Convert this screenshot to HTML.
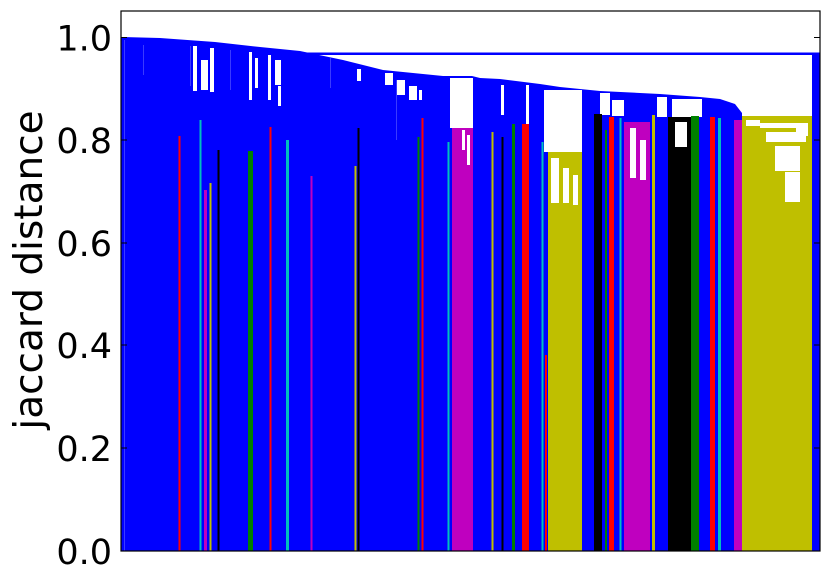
<!DOCTYPE html>
<html><head><meta charset="utf-8"><style>
html,body{margin:0;padding:0;background:#fff;}
svg{display:block;}
text{font-family:"DejaVu Sans","Liberation Sans",sans-serif;fill:#000;}
</style></head><body>
<svg width="831" height="581" viewBox="0 0 831 581" xmlns="http://www.w3.org/2000/svg">
<polygon fill="#0000ff" points="121,37 160,38 215,42 260,47 300,51 343,60 383,70 443,76 472,76 480,78 500,79 540,84 560,87 580,89 600,91 640,93 660,94 700,97 720,99 735,104 742,113 742,551 121,551"/>
<rect x="270" y="52.5" width="550" height="2.5" fill="#0000ff"/>
<rect x="812" y="54" width="8" height="497" fill="#0000ff"/>
<g fill="#fff">
<rect x="193" y="46" width="4" height="45"/><rect x="201" y="60" width="7" height="30"/><rect x="210" y="48" width="4" height="44"/>
<rect x="249" y="52" width="3" height="48"/><rect x="255" y="58" width="3" height="30"/>
<rect x="268" y="55" width="3" height="45"/><rect x="275" y="60" width="6" height="25"/><rect x="278" y="86" width="3" height="20"/>
<rect x="357" y="69" width="4" height="12"/>
<rect x="385" y="73" width="8" height="12"/><rect x="397" y="80" width="8" height="15"/><rect x="409" y="86" width="8" height="14"/><rect x="419" y="90" width="3" height="10"/>
<rect x="450" y="78" width="23" height="50"/>
<rect x="501" y="85" width="3" height="30"/>
<rect x="526" y="85" width="3" height="65"/>
<rect x="544" y="90" width="38" height="62"/>
<rect x="600" y="93" width="10" height="22"/><rect x="612" y="100" width="12" height="16"/>
<rect x="657" y="97" width="10" height="20"/><rect x="672" y="99" width="30" height="18"/>
</g>
<g fill="#3a3aff">
<rect x="124" y="40" width="1" height="511"/><rect x="143" y="45" width="1" height="30"/><rect x="190" y="46" width="1" height="40"/>
<rect x="230" y="50" width="1" height="40"/><rect x="330" y="58" width="1" height="30"/><rect x="396" y="80" width="1" height="60"/>
<rect x="460" y="130" width="1" height="60"/><rect x="560" y="160" width="1" height="80"/>
</g>
<g>
<rect x="178.5" y="136" width="2" height="415" fill="#ff0000"/>
<rect x="199.5" y="120" width="2" height="431" fill="#00bfbf"/>
<rect x="204" y="190" width="3" height="361" fill="#bf00bf"/>
<rect x="209.5" y="183" width="2" height="368" fill="#bfbf00"/>
<rect x="217.5" y="150" width="2" height="401" fill="#000"/>
<rect x="248" y="151" width="5" height="400" fill="#008000"/>
<rect x="269.5" y="127" width="2" height="424" fill="#ff0000"/>
<rect x="286" y="140" width="3" height="411" fill="#00bfbf"/>
<rect x="310.5" y="176" width="2" height="375" fill="#bf00bf"/>
<rect x="354.5" y="166" width="2" height="385" fill="#bfbf00"/>
<rect x="357.5" y="128" width="2" height="423" fill="#000"/>
<rect x="417.5" y="137" width="2" height="414" fill="#008000"/>
<rect x="421.5" y="118" width="2" height="433" fill="#ff0000"/>
<rect x="447.5" y="142" width="2" height="409" fill="#00bfbf"/>
<rect x="452" y="128" width="21" height="423" fill="#bf00bf"/>
<rect x="491.5" y="132" width="2" height="419" fill="#bfbf00"/>
<rect x="501.5" y="137" width="2" height="414" fill="#000"/>
<rect x="512" y="124" width="3" height="427" fill="#008000"/>
<rect x="522" y="124" width="7" height="427" fill="#ff0000"/>
<rect x="541.5" y="142" width="2" height="409" fill="#00bfbf"/>
<rect x="545" y="355" width="2" height="196" fill="#ff0000"/>
<rect x="548" y="152" width="34" height="399" fill="#bfbf00"/>
<rect x="594" y="114" width="8" height="437" fill="#000"/>
<rect x="605" y="130" width="2" height="421" fill="#008000"/>
<rect x="609" y="117" width="5" height="434" fill="#ff0000"/>
<rect x="619.5" y="118" width="2" height="433" fill="#00bfbf"/>
<rect x="624" y="122" width="26" height="429" fill="#bf00bf"/>
<rect x="652" y="115" width="3" height="436" fill="#bfbf00"/>
<rect x="668" y="117" width="23" height="434" fill="#000"/>
<rect x="691" y="116" width="8" height="435" fill="#008000"/>
<rect x="710" y="117" width="5" height="434" fill="#ff0000"/>
<rect x="718" y="118" width="3" height="433" fill="#00bfbf"/>
<rect x="734" y="120" width="8" height="431" fill="#bf00bf"/>
<rect x="742" y="116" width="70" height="435" fill="#bfbf00"/>
</g>
<g fill="#fff">
<rect x="462" y="130" width="3" height="20"/><rect x="467" y="135" width="3" height="30"/>
<rect x="551" y="158" width="8" height="45"/><rect x="563" y="168" width="6" height="35"/><rect x="573" y="175" width="5" height="30"/>
<rect x="630" y="128" width="6" height="50"/><rect x="640" y="140" width="6" height="40"/>
<rect x="675" y="122" width="12" height="25"/>
<rect x="746" y="120" width="14" height="6"/><rect x="760" y="123" width="48" height="5"/><rect x="766" y="132" width="40" height="10"/><rect x="775" y="146" width="25" height="25"/><rect x="785" y="172" width="15" height="30"/><rect x="796" y="128" width="12" height="8"/>
</g>
<rect x="121" y="11" width="699" height="540" fill="none" stroke="#000" stroke-width="1.2"/>
<g stroke="#000" stroke-width="1">
<line x1="121" y1="37.5" x2="127" y2="37.5"/><line x1="814" y1="37.5" x2="820" y2="37.5"/>
<line x1="121" y1="140" x2="127" y2="140"/><line x1="814" y1="140" x2="820" y2="140"/>
<line x1="121" y1="243" x2="127" y2="243"/><line x1="814" y1="243" x2="820" y2="243"/>
<line x1="121" y1="345" x2="127" y2="345"/><line x1="814" y1="345" x2="820" y2="345"/>
<line x1="121" y1="448" x2="127" y2="448"/><line x1="814" y1="448" x2="820" y2="448"/>
</g>
<g font-size="35" text-anchor="end">
<text x="112" y="50.5">1.0</text>
<text x="112" y="153">0.8</text>
<text x="112" y="256">0.6</text>
<text x="112" y="358">0.4</text>
<text x="112" y="461">0.2</text>
<text x="112" y="564">0.0</text>
</g>
<text font-size="39" text-anchor="middle" transform="translate(42,270) rotate(-90)">jaccard distance</text>
</svg>
</body></html>
